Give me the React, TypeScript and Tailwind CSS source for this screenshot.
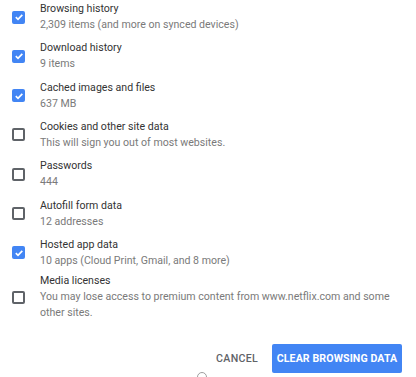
import React from "react";

type Item = { title: string; sub: string[]; checked: boolean; extra?: string };

const items: Item[] = [
  { title: "Browsing history", sub: ["2,309 items (and more on synced devices)"], checked: true },
  { title: "Download history", sub: ["9 items"], checked: true },
  { title: "Cached images and files", sub: ["637 MB"], checked: true },
  { title: "Cookies and other site data", sub: ["This will sign you out of most websites."], checked: false },
  { title: "Passwords", sub: ["444"], checked: false },
  { title: "Autofill form data", sub: ["12 addresses"], checked: false },
  { title: "Hosted app data", sub: ["10 apps (Cloud Print, Gmail, and 8 more)"], checked: true },
  {
    title: "Media licenses",
    sub: ["You may lose access to premium content from www.netflix.com and some", "other sites."],
    checked: false,
    extra: "-mt-[3px]",
  },
];

function Box({ checked }: { checked: boolean }) {
  if (checked) {
    return (
      <div className="w-[13px] h-[13px] rounded-[2px] bg-[#4285f4] flex items-center justify-center shrink-0">
        <svg width="10" height="10" viewBox="0 0 10 10">
          <path d="M1.8 5.2 L4 7.3 L8.3 2.8" fill="none" stroke="white" strokeWidth="1.7" />
        </svg>
      </div>
    );
  }
  return <div className="w-[13px] h-[13px] rounded-[2px] border-2 border-[#5f6368] shrink-0" />;
}

export default function App() {
  return (
    <div
      className="w-[416px] h-[377px] bg-white overflow-hidden relative"
      style={{ fontFamily: "Roboto, 'Noto Sans', sans-serif" }}
    >
      <div className="flex flex-col gap-[7.33px] mt-[1px]">
        {items.map((it) => (
          <div key={it.title} className={`flex items-center ${it.extra ?? ""}`}>
            <div className="w-[40px] pl-[12px] flex items-center">
              <Box checked={it.checked} />
            </div>
            <div className="flex flex-col text-[10.6px] leading-[16px]">
              <div className="text-[#333333]">{it.title}</div>
              {it.sub.map((s) => (
                <div key={s} className="text-[#7a7a7a]">
                  {s}
                </div>
              ))}
            </div>
          </div>
        ))}
      </div>
      <div className="flex justify-end items-center mt-[23px] pr-[14px] gap-[14px]">
        <button className="text-[10.6px] font-medium text-[#5f6368] tracking-[0.3px] px-0">CANCEL</button>
        <button className="h-[29px] w-[130px] rounded-[2px] bg-[#4285f4] text-white text-[10.6px] font-bold tracking-[0.1px]">
          CLEAR BROWSING DATA
        </button>
      </div>
      <div className="pl-[197px] mt-[-1px]">
        <div className="w-[10px] h-[10px] rounded-full border border-[#9e9e9e]" />
      </div>
    </div>
  );
}
